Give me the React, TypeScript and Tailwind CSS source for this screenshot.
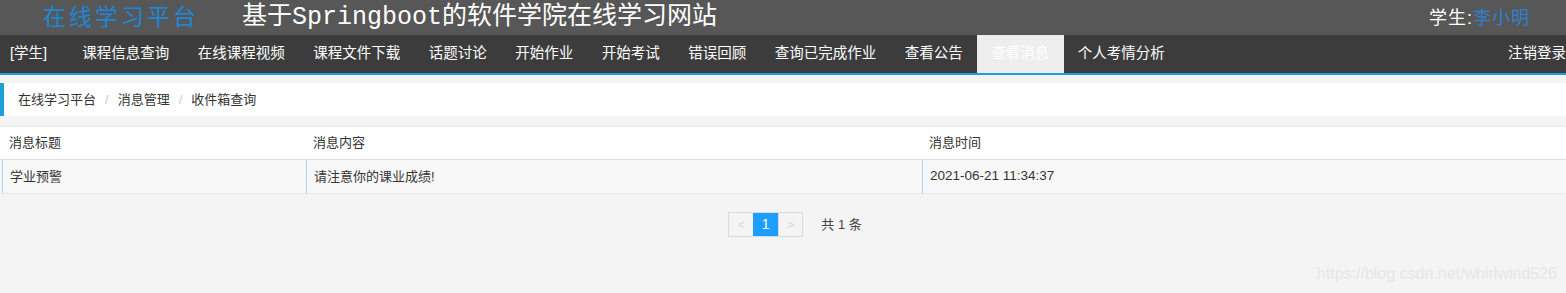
const sans = { fontFamily: '"Liberation Sans", "Noto Sans CJK SC", sans-serif' };

const navItems = [
  "课程信息查询",
  "在线课程视频",
  "课程文件下载",
  "话题讨论",
  "开始作业",
  "开始考试",
  "错误回顾",
  "查询已完成作业",
  "查看公告",
  "查看消息",
  "个人考情分析",
];

export default function App() {
  return (
    <div
      className="min-h-[293px] bg-[#f4f4f4] overflow-hidden"
      style={sans}
    >
      {/* top banner */}
      <header className="h-[35px] bg-[#575757] flex items-center">
        <span className="ml-[43px] text-[23px] leading-none tracking-[3px] text-[#1d86d6] font-['Liberation_Serif','Noto_Sans_CJK_SC',serif]">
          在线学习平台
        </span>
        <span className="ml-[43px] text-[25px] leading-none text-white font-['Liberation_Mono','Noto_Sans_CJK_SC',monospace]">
          基于Springboot的软件学院在线学习网站
        </span>
        <span className="ml-auto mr-[36px] text-[18px] leading-none tracking-[1px] text-white">
          学生:<span className="text-[#2f80d0]">李小明</span>
        </span>
      </header>

      {/* main nav */}
      <nav className="h-[40px] bg-[#3c3c3c] border-b-2 border-[#1e9fdb] flex text-white text-[14.5px]">
        <a className="w-[68px] pl-[10px] flex items-center">[学生]</a>
        {navItems.map((t) => (
          <a
            key={t}
            className={
              "px-[14.25px] flex items-center " +
              (t === "查看消息" ? "bg-[#eeeeee]" : "")
            }
          >
            {t}
          </a>
        ))}
        <a className="ml-auto flex items-center">注销登录</a>
      </nav>

      {/* breadcrumb */}
      <div className="mt-[8px] h-[33px] bg-white border-l-4 border-[#1e9fdb] flex items-center pl-[14px] text-[13px] text-[#333]">
        <span>在线学习平台</span>
        <span className="mx-[9px] text-[#c8c8c8]">/</span>
        <span>消息管理</span>
        <span className="mx-[9px] text-[#c8c8c8]">/</span>
        <span>收件箱查询</span>
      </div>

      {/* table */}
      <div className="mt-[10px] text-[13px] text-[#333]">
        <div className="h-[34px] bg-white border-t border-[#e8e8e8] border-b border-b-[#dedede] flex items-center">
          <div className="w-[306px] pl-[9px]">消息标题</div>
          <div className="w-[616px] pl-[7px]">消息内容</div>
          <div className="flex-1 pl-[7px]">消息时间</div>
        </div>
        <div className="ml-[2px] h-[34px] bg-[#f8f8f8] border-b border-[#e6e6e6] flex">
          <div className="w-[304px] pl-[7px] border-l border-[#a9d6f3] flex items-center">学业预警</div>
          <div className="w-[616px] pl-[7px] border-l border-[#a9d6f3] flex items-center">请注意你的课业成绩!</div>
          <div className="flex-1 pl-[7px] border-l border-[#a9d6f3] flex items-center text-[13.5px]">2021-06-21 11:34:37</div>
        </div>
      </div>

      {/* pager */}
      <div className="mt-[18px] flex items-center justify-center pl-[24px]">
        <div className="flex h-[25px] border border-[#d3dde8]">
          <span className="w-[24px] flex items-center justify-center text-[12px] text-[#d6d6d6]">&lt;</span>
          <span className="w-[25px] flex items-center justify-center text-[14px] text-white bg-[#1e9fff]">1</span>
          <span className="w-[24px] flex items-center justify-center text-[12px] text-[#d6d6d6] border-l border-[#d3dde8]">&gt;</span>
        </div>
        <span className="ml-[18px] text-[13px] text-[#444]">共 1 条</span>
      </div>

      {/* watermark */}
      <div className="mt-[29px] pr-[9px] flex justify-end text-[16px] text-[#e6e6e6] leading-none">
        https://blog.csdn.net/whirlwind526
      </div>
    </div>
  );
}
